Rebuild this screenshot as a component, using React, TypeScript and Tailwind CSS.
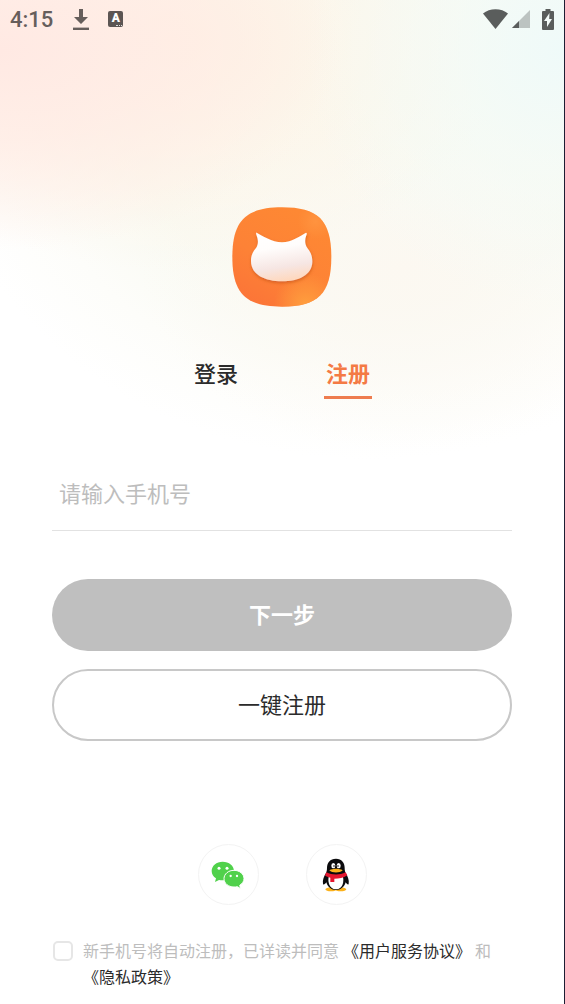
import React, { useState } from 'react';

const DownloadIcon = () => (
  <svg viewBox="0 0 16 21" className="w-4 h-[21px]" fill="currentColor" aria-hidden="true">
    <path d="M6 0h4v8h5l-7 7-7-7h5z" />
    <path d="M0 18.6h16V21H0z" />
  </svg>
);

const WifiIcon = () => (
  <svg viewBox="0 0 25 20" className="w-[25px] h-5" fill="currentColor" aria-hidden="true">
    <path d="M12.5 20 0 4.6C3.400 1.800 7.800.3 12.500.3S21.600 1.800 25 4.600z" />
  </svg>
);

const SignalIcon = () => (
  <svg viewBox="0 0 18 18" className="w-[18px] h-[18px]" fill="currentColor" aria-hidden="true">
    <path d="M18 0v18H0z" opacity="0.35" />
    <path d="M7 11v7H0z" />
  </svg>
);

const BatteryIcon = () => (
  <svg viewBox="0 0 12 21" className="w-3 h-[21px]" aria-hidden="true">
    <path
      fill="currentColor"
      d="M3.500 0h5v2H11q1 0 1 1v17q0 1-1 1H1q-1 0-1-1V3q0-1 1-1h2.500z"
    />
    <path fill="#f4fbf9" d="M7.500 4 2 12h3v6l5-8H7.200z" />
  </svg>
);

const StatusBar = () => (
  <div className="flex items-center justify-between h-[38px] px-[10px] text-[#665e5b]">
    <div className="flex items-center">
      <span className="pt-[2px] font-[Roboto,sans-serif] text-[22px] leading-7 font-medium">4:15</span>
      <span className="ml-5">
        <DownloadIcon />
      </span>
      <span className="relative ml-[19px] w-[15px] h-4 rounded-xs bg-[#5c5553] text-white text-center font-[Roboto,sans-serif] text-[12px] leading-[15px] font-black">
        A
        <span className="absolute right-px bottom-px w-[6px] border-b border-dotted border-white/80" />
      </span>
    </div>
    <div className="flex items-center text-[#5a5d5c]">
      <WifiIcon />
      <span className="ml-1">
        <SignalIcon />
      </span>
      <span className="ml-3">
        <BatteryIcon />
      </span>
    </div>
  </div>
);

const CatLogo = () => (
  <svg viewBox="30 28 300 300" className="w-[100px] h-[100px]" role="img" aria-label="Logo">
    <defs>
      <linearGradient id="tile" x1="0" y1="1" x2="0.6" y2="0">
        <stop offset="0" stopColor="#fb7138" />
        <stop offset="0.5" stopColor="#fd8236" />
        <stop offset="1" stopColor="#fe8833" />
      </linearGradient>
      <radialGradient id="glow" cx="0.74" cy="0.98" r="0.32">
        <stop offset="0" stopColor="#ff9f3e" />
        <stop offset="1" stopColor="#ff9f3e" stopOpacity="0" />
      </radialGradient>
      <radialGradient id="glowTop" cx="0.84" cy="0.14" r="0.18">
        <stop offset="0" stopColor="#ff933f" />
        <stop offset="1" stopColor="#ff933f" stopOpacity="0" />
      </radialGradient>
      <linearGradient id="cat" x1="0.4" y1="0" x2="0.6" y2="1">
        <stop offset="0" stopColor="#ffffff" />
        <stop offset="0.3" stopColor="#fffdfc" />
        <stop offset="0.7" stopColor="#f6e6e3" />
        <stop offset="1" stopColor="#ffd7bb" />
      </linearGradient>
      <filter id="shade" x="-20%" y="-20%" width="140%" height="150%">
        <feDropShadow dx="1" dy="5" stdDeviation="4" floodColor="#b8460c" floodOpacity="0.55" />
      </filter>
    </defs>
    <path
      fill="url(#tile)"
      d="M180 29C288 29 328 68 328 178S288 327 180 327 31 288 31 178 72 29 180 29z"
    />
    <path
      fill="url(#glow)"
      d="M180 29C288 29 328 68 328 178S288 327 180 327 31 288 31 178 72 29 180 29z"
    />
    <path
      fill="url(#glowTop)"
      d="M180 29C288 29 328 68 328 178S288 327 180 327 31 288 31 178 72 29 180 29z"
    />
    <path
      fill="url(#cat)"
      filter="url(#shade)"
      d="M104 105C120 113 150 134 180 134S236 113 252 105C255 105 255 109 253 113C247 128 249 141 256 151C266 163 271 174 271 192C270 232 230 251 180 251S87 232 87 190C87 172 93 161 102 151C109 141 110 128 103 111C102 107 102 104 104 105z"
    />
  </svg>
);

const WechatIcon = () => (
  <svg viewBox="63 75 102 84" className="w-[34px] h-7" aria-hidden="true">
    <path
      fill="#50d14b"
      d="M98 77C79 77 65 89 65 105c0 9 5 17 13 22l-3 11 12-6c4 1 7 1 11 1 19 0 34-12 34-28S117 77 98 77z"
    />
    <path
      fill="#50d14b"
      stroke="#fff"
      strokeWidth="3"
      d="M132 103c-17 0-30 11-30 25s13 25 30 25c4 0 7 0 10-1l10 6-3-10c8-5 13-12 13-20 0-14-13-25-30-25z"
    />
    <g fill="#fff">
      <circle cx="87" cy="97" r="4.500" />
      <circle cx="111" cy="97" r="4.500" />
      <circle cx="122" cy="120" r="3.500" />
      <circle cx="141" cy="120" r="3.500" />
    </g>
  </svg>
);

const QQIcon = () => (
  <svg viewBox="396 66 84 102" className="w-7 h-[34px]" aria-hidden="true">
    <ellipse cx="423" cy="160" rx="17" ry="6" fill="#fbb11b" />
    <ellipse cx="452" cy="160" rx="17" ry="6" fill="#fbb11b" />
    <path
      fill="#0b0b0d"
      d="M438 68c-18 0-27 12-27 27 0 7-1 12-3 16-6 9-11 22-9 32 1 5 6 2 10-4 4 14 15 23 29 23s25-9 29-23c4 6 8 9 9 4 2-10-3-23-9-32-2-4-3-9-3-16 0-15-9-27-26-27z"
    />
    <path fill="#fff" d="M417 120h41c5 12 2 40-20 40s-26-28-21-40z" />
    <path fill="#e5162e" d="M409 109c18 9 40 9 58 0l5 9c-12 8-25 10-39 10v10h-12v-13c-6-1-12-3-16-7z" />
    <ellipse cx="430" cy="89" rx="6" ry="8" fill="#fff" />
    <ellipse cx="446" cy="89" rx="6" ry="8" fill="#fff" />
    <circle cx="432" cy="90" r="2.500" fill="#0b0b0d" />
    <circle cx="444" cy="90" r="2.500" fill="#0b0b0d" />
    <path fill="#fbb11b" d="M418 103c10-6 30-6 40 0-8 9-32 9-40 0z" />
  </svg>
);

interface TabButtonProps {
  label: string;
  active: boolean;
  onClick: () => void;
}

const TabButton: React.FC<TabButtonProps> = ({ label, active, onClick }) => (
  <button
    type="button"
    role="tab"
    aria-selected={active}
    onClick={onClick}
    className={`w-12 pb-2 border-b-3 text-[22px] leading-8 whitespace-nowrap ${
      active ? 'border-[#ee7c4f] text-[#f47a45] font-bold' : 'border-transparent text-[#2b2b2b] font-medium'
    }`}
  >
    {label}
  </button>
);

const socials = [
  { name: '微信', icon: <WechatIcon /> },
  { name: 'QQ', icon: <QQIcon /> },
];

export default function App() {
  const [tab, setTab] = useState('register');

  return (
    <div className="relative min-h-screen bg-white border-r border-[#1d1d33] font-['Noto_Sans_CJK_SC',sans-serif]">
      {/* Soft colour wash behind the header */}
      <div className="absolute inset-x-0 top-0 h-[480px] bg-[radial-gradient(ellipse_340px_200px_at_0px_50px,#ffe9e3_0%,#ffece5cc_45%,#fff3ec00_100%),radial-gradient(ellipse_260px_260px_at_100%_50px,#effaf9_0%,#f3fbf899_45%,#f6fbf500_100%),radial-gradient(ellipse_340px_230px_at_170px_40px,#fff0e3_0%,#fff4e799_50%,#fffaf000_100%),radial-gradient(ellipse_260px_180px_at_400px_270px,#fcf8f1_0%,#fcf9f399_50%,#fdfaf500_100%),radial-gradient(ellipse_430px_350px_at_370px_110px,#f8faf0_0%,#f9faf2_55%,#fdfdfa_80%,#ffffff00_100%)]" />

      <div className="relative">
        <StatusBar />

        <main className="flex flex-col px-[52px] pt-[169px] pb-[14px]">
          <div className="flex justify-center">
            <CatLogo />
          </div>

          <div role="tablist" className="flex justify-center gap-[84px] mt-[49px]">
            <TabButton label="登录" active={tab === 'login'} onClick={() => setTab('login')} />
            <TabButton label="注册" active={tab === 'register'} onClick={() => setTab('register')} />
          </div>

          <input
            type="tel"
            aria-label="请输入手机号"
            placeholder="请输入手机号"
            className="w-full h-[74px] mt-[58px] px-[7px] pb-1 border-b border-[#e2e2e2] text-[22px] text-[#2b2b2b] placeholder:text-[#bdbdbd] outline-none"
          />

          <button
            type="button"
            className="w-full h-[72px] mt-12 pb-1 rounded-full bg-[#bfbfbf] text-white text-[22px] font-bold"
          >
            下一步
          </button>
          <button
            type="button"
            className="w-full h-[72px] mt-[18px] pb-1 rounded-full border-2 border-[#c8c8c8] bg-white text-[#2b2b2b] text-[22px]"
          >
            一键注册
          </button>

          <div className="flex justify-center gap-[47px] mt-[103px]">
            {socials.map((item) => (
              <button
                key={item.name}
                type="button"
                aria-label={item.name}
                className="flex items-center justify-center w-[61px] h-[61px] rounded-full border border-[#f3f3f3] bg-white"
              >
                {item.icon}
              </button>
            ))}
          </div>

          {/* Agreement */}
          <div className="flex items-start mt-8">
            <input
              id="agree"
              type="checkbox"
              className="appearance-none shrink-0 w-5 h-5 mt-1 ml-px mr-[10px] rounded-[5px] border-2 border-[#e6e6e6] bg-white checked:bg-[#f47a45]"
            />
            <label htmlFor="agree" className="text-[16px] leading-[26px] text-[#bdbdbd]">
              新手机号将自动注册，已详读并同意
              <a href="#terms" className="mx-1 whitespace-nowrap text-[#2b2b2b]">《用户服务协议》</a>
              和
              <a href="#privacy" className="inline-block whitespace-nowrap text-[#2b2b2b]">《隐私政策》</a>
            </label>
          </div>
        </main>
      </div>
    </div>
  );
}
